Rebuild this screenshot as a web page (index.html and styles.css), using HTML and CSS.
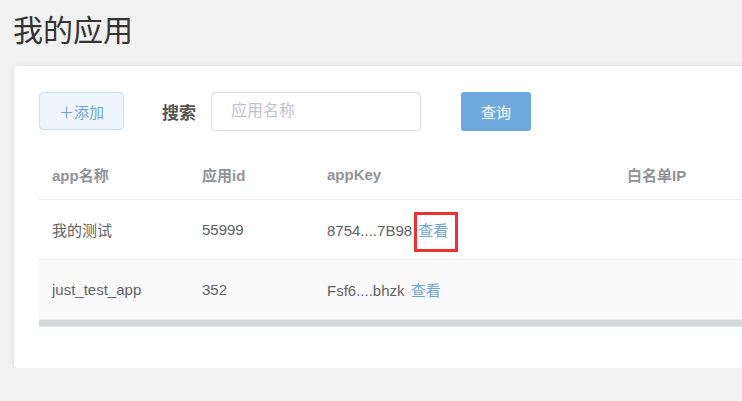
FILE: index.html
```html
<!DOCTYPE html>
<html lang="zh-CN">
  <head>
    <meta charset="UTF-8" />
    <meta name="viewport" content="width=device-width, initial-scale=1.0" />
    <title>我的应用</title>
    <link rel="stylesheet" href="styles.css">
  </head>
  <body>
    <div class="page">
      <h1 class="page-title">我的应用</h1>

      <div class="card">
        <div class="toolbar">
          <button class="btn-add">＋添加</button>
          <span class="search-label">搜索</span>
          <input class="search-input" type="text" placeholder="应用名称" />
          <button class="btn-query">查询</button>
        </div>

        <div class="table-wrap">
          <table class="app-table">
            <colgroup>
              <col style="width: 150px" />
              <col style="width: 125px" />
              <col style="width: 300px" />
              <col />
            </colgroup>
            <thead>
              <tr>
                <th>app名称</th>
                <th>应用id</th>
                <th>appKey</th>
                <th>白名单IP</th>
              </tr>
            </thead>
            <tbody>
              <tr>
                <td>我的测试</td>
                <td>55999</td>
                <td>8754....7B98 <a class="link mark">查看</a></td>
                <td></td>
              </tr>
              <tr class="striped">
                <td>just_test_app</td>
                <td>352</td>
                <td>Fsf6....bhzk <a class="link">查看</a></td>
                <td></td>
              </tr>
            </tbody>
          </table>
          <div class="scrollbar"></div>
        </div>
      </div>
    </div>
  </body>
</html>
```

FILE: styles.css
```css
body {
  margin: 0;
  padding: 0;
  background-color: #f1f1f1;
  font-family: "Liberation Sans", "Noto Sans CJK SC", sans-serif;
  color: #606266;
  overflow: hidden;
}

.page {
  padding: 10px 0 0 13px;
  width: 1000px;
}

.page-title {
  margin: 0;
  font-size: 30px;
  font-weight: normal;
  line-height: 42px;
  color: #333;
}

.card {
  margin: 14px 0 0 1px;
  background-color: #fff;
  border-radius: 4px;
  box-shadow: 0 1px 6px rgba(0, 0, 0, 0.1);
  padding: 26px 0 41px 25px;
}

.toolbar {
  display: flex;
  align-items: center;
  height: 38px;
}

.btn-add {
  width: 85px;
  height: 38px;
  background-color: #eef5fc;
  border: 1px solid #c8e0f4;
  border-radius: 4px;
  color: #6fa4d8;
  font-family: inherit;
  font-size: 15px;
  padding: 0;
}

.search-label {
  margin-left: 38px;
  font-size: 17px;
  font-weight: bold;
  color: #555;
}

.search-input {
  margin-left: 15px;
  width: 210px;
  height: 39px;
  box-sizing: border-box;
  border: 1px solid #dcdfe6;
  border-radius: 4px;
  padding: 0 19px;
  font-family: inherit;
  font-size: 16px;
  color: #606266;
}

.search-input::placeholder {
  color: #c0c4cc;
}

.btn-query {
  margin-left: 40px;
  width: 70px;
  height: 39px;
  background-color: #6fa8dc;
  border: none;
  border-radius: 3px;
  color: #fff;
  font-family: inherit;
  font-size: 15px;
  padding: 0;
}

.table-wrap {
  margin-top: 20px;
}

.app-table {
  width: 900px;
  border-collapse: collapse;
  table-layout: fixed;
  font-size: 15px;
}

.app-table th {
  height: 49px;
  text-align: left;
  padding: 0 13px;
  font-weight: bold;
  color: #909399;
  border-bottom: 1px solid #ebeef5;
}

.app-table td {
  height: 59px;
  padding: 0 13px;
  border-bottom: 1px solid #ebeef5;
  color: #606266;
}

.app-table tr.striped td {
  background-color: #fafafa;
}

.link {
  margin-left: 2px;
  color: #6fa3d8;
  cursor: pointer;
}

/* red highlight frame drawn over the first "查看" */
.mark {
  position: relative;
}

.mark::after {
  content: "";
  position: absolute;
  left: -4px;
  right: -10px;
  top: -10px;
  bottom: -13px;
  border: 3px solid #f03030;
}

.scrollbar {
  width: 900px;
  height: 6px;
  background-color: #d6d7da;
  border-bottom: 1px solid #e6e8ee;
}
```
